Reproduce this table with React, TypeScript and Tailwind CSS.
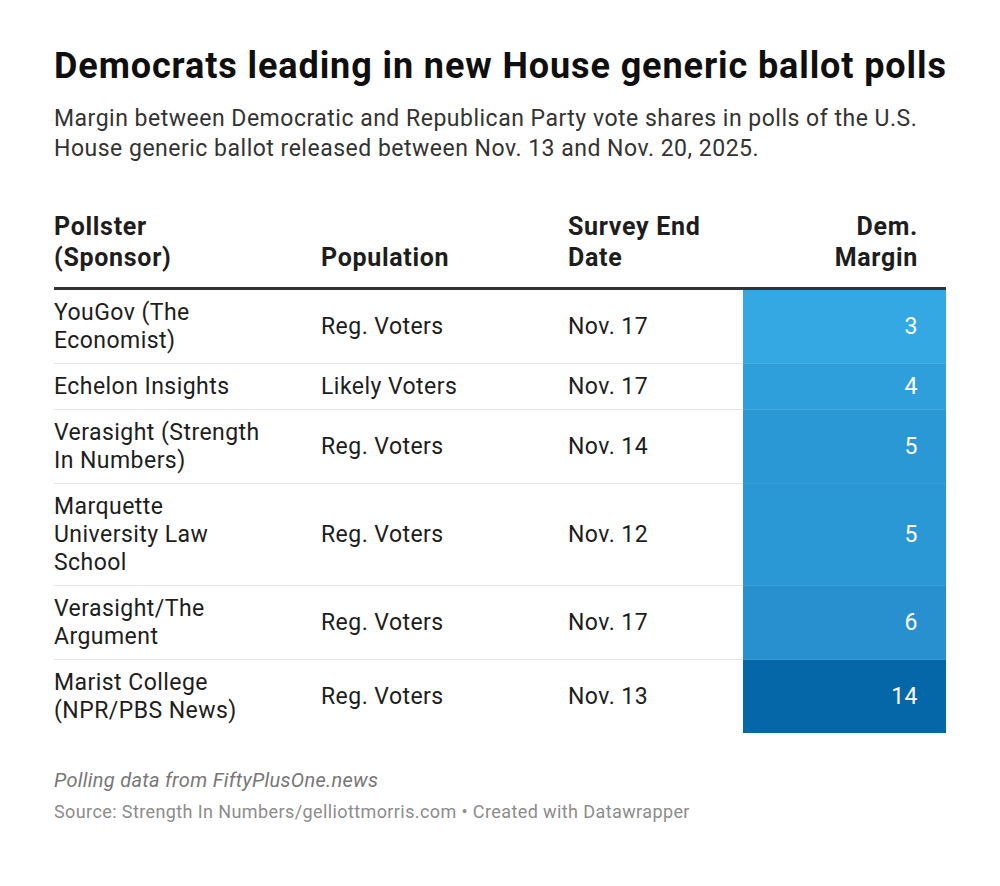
import React from "react";

type Row = { pollster: string[]; pop: string; date: string; margin: number; color: string };

const rows: Row[] = [
  { pollster: ["YouGov (The", "Economist)"], pop: "Reg. Voters", date: "Nov. 17", margin: 3, color: "bg-[#34a8e2]" },
  { pollster: ["Echelon Insights"], pop: "Likely Voters", date: "Nov. 17", margin: 4, color: "bg-[#2f9fdc]" },
  { pollster: ["Verasight (Strength", "In Numbers)"], pop: "Reg. Voters", date: "Nov. 14", margin: 5, color: "bg-[#2b98d6]" },
  { pollster: ["Marquette", "University Law", "School"], pop: "Reg. Voters", date: "Nov. 12", margin: 5, color: "bg-[#2b98d6]" },
  { pollster: ["Verasight/The", "Argument"], pop: "Reg. Voters", date: "Nov. 17", margin: 6, color: "bg-[#2890cf]" },
  { pollster: ["Marist College", "(NPR/PBS News)"], pop: "Reg. Voters", date: "Nov. 13", margin: 14, color: "bg-[#0566a8]" },
];

export default function App() {
  return (
    <div
      className="w-[1000px] h-[886px] bg-white text-[#1d1d1d]"
      style={{ fontFamily: "Roboto, 'Liberation Sans', sans-serif" }}
    >
      <div className="pl-[54px] pr-[54px] pt-[46px]">
        <h1 className="text-[36px] leading-[40px] font-bold text-[#0f0f0f] tracking-[0.9px] whitespace-nowrap">
          Democrats leading in new House generic ballot polls
        </h1>
        <p className="mt-[18px] text-[23px] leading-[30px] text-[#333333] tracking-[0.5px] whitespace-nowrap">
          Margin between Democratic and Republican Party vote shares in polls of the U.S.
          <br />
          House generic ballot released between Nov. 13 and Nov. 20, 2025.
        </p>

        <div className="mt-[47px]">
          <div className="grid grid-cols-[267px_247px_175px_203px] items-end border-b-[3px] border-[#333333] pb-[14px] text-[25px] leading-[31px] font-bold tracking-[0.7px] text-[#1d1d1d]">
            <div>
              Pollster
              <br />
              (Sponsor)
            </div>
            <div>Population</div>
            <div>
              Survey End
              <br />
              Date
            </div>
            <div className="text-right pr-[28px]">
              Dem.
              <br />
              Margin
            </div>
          </div>

          {rows.map((r, i) => {
            const last = i === rows.length - 1;
            const b = last ? "" : "border-b border-[#e6e6e6]";
            return (
              <div key={i} className="grid grid-cols-[267px_247px_175px_203px] text-[23px] leading-[28px] tracking-[0.45px]">
                <div className={`flex flex-col justify-center pt-[9px] pb-[8px] ${b}`}>
                  {r.pollster.map((l, j) => (
                    <span key={j} className="whitespace-nowrap">{l}</span>
                  ))}
                </div>
                <div className={`flex items-center ${b}`}>{r.pop}</div>
                <div className={`flex items-center ${b}`}>{r.date}</div>
                <div
                  className={`flex items-center justify-end pr-[28px] text-white ${r.color} ${
                    last ? "" : "border-b border-[#ffffff14]"
                  }`}
                >
                  {r.margin}
                </div>
              </div>
            );
          })}
        </div>

        <p className="mt-[35px] text-[20px] leading-[24px] italic text-[#777777] tracking-[0.3px]">
          Polling data from FiftyPlusOne.news
        </p>
        <p className="mt-[8px] text-[18px] leading-[24px] text-[#8c8c8c] tracking-[0.4px]">
          Source: Strength In Numbers/gelliottmorris.com • Created with Datawrapper
        </p>
      </div>
    </div>
  );
}
